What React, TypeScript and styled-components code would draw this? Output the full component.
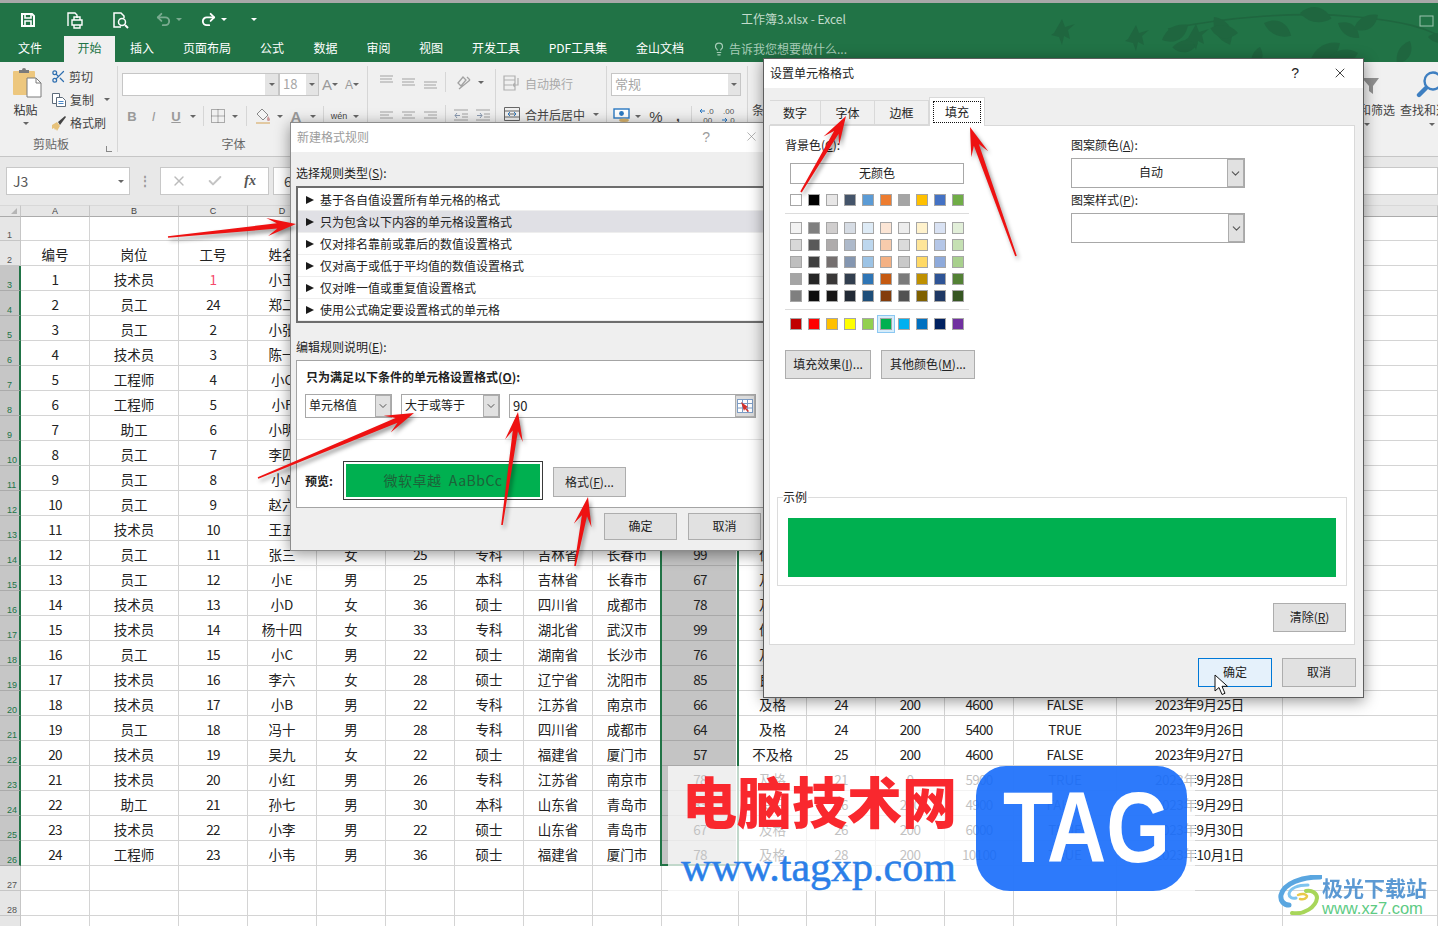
import React from 'react';
import styled, { createGlobalStyle } from 'styled-components';
import { Check, ChevronDown, Lightbulb, Redo2, Scissors, Undo2, X } from 'lucide-react';

const CJK = '"Noto Sans CJK SC", "Noto Sans", sans-serif';

const GlobalStyle = createGlobalStyle`
  html, body { margin: 0; padding: 0; background: #fff; }
  * { box-sizing: border-box; }
`;

const Page = styled.div`
  position: relative;
  width: 1438px;
  height: 926px;
  overflow: hidden;
  font-family: ${CJK};
  font-size: 12px;
  color: #222;
  background: #fff;
`;

/* ---------- title bar + tabs ---------- */

const TopEdge = styled.div`
  height: 3px;
  background: #a8a8a8;
`;

const Header = styled.header`
  position: relative;
  height: 59px;
  background: #217346;
  overflow: hidden;
`;

const Leaves = styled.svg`
  position: absolute;
  left: 1038px;
  top: 0;
  width: 400px;
  height: 59px;
  fill: #1f663f;
`;

const Qat = styled.div`
  position: relative;
  display: flex;
  align-items: center;
  height: 33px;
  padding-left: 20px;
  color: #fff;
`;

const QatSlot = styled.div<{ $w: number; $dim?: boolean }>`
  width: ${(p) => p.$w}px;
  display: flex;
  align-items: center;
  opacity: ${(p) => (p.$dim ? 0.4 : 1)};
`;

const Caret = styled.span<{ $c?: string; $ml?: number }>`
  display: inline-block;
  width: 0;
  height: 0;
  margin-left: ${(p) => p.$ml ?? 4}px;
  border-left: 3px solid transparent;
  border-right: 3px solid transparent;
  border-top: 3px solid ${(p) => p.$c ?? '#666'};
`;

const DocTitle = styled.div`
  position: absolute;
  left: 741px;
  top: 7px;
  color: #c3dccd;
  font-size: 12px;
  line-height: 18px;
`;

const TabRow = styled.nav`
  position: relative;
  display: flex;
  height: 26px;
`;

const Tab = styled.div<{ $w: number; $active?: boolean }>`
  width: ${(p) => p.$w}px;
  text-align: center;
  line-height: 24px;
  color: ${(p) => (p.$active ? '#217346' : '#fff')};
  background: ${(p) => (p.$active ? '#f0f0f0' : 'transparent')};
  &:first-child {
    padding-right: 4px;
  }
`;

const TellMe = styled.div`
  display: flex;
  align-items: center;
  gap: 3px;
  margin-left: 13px;
  padding-bottom: 1px;
  color: #a8cdb8;
`;

/* ---------- ribbon ---------- */

const Ribbon = styled.section`
  display: flex;
  height: 95px;
  padding-top: 4px;
  background: #f0f0f0;
  border-bottom: 1px solid #c6c6c6;
  overflow: hidden;
  color: #444;
`;

const Group = styled.div<{ $w: number }>`
  flex: 0 0 ${(p) => p.$w}px;
  height: 86px;
  display: flex;
  flex-direction: column;
  border-right: 1px solid #d6d6d6;
  position: relative;
`;

const GroupBody = styled.div`
  display: flex;
  height: 70px;
`;

const GroupLabel = styled.div<{ $pr: number }>`
  height: 18px;
  padding-right: ${(p) => p.$pr}px;
  padding-top: 2px;
  line-height: 16px;
  text-align: center;
  color: #666;
`;

const Launcher = styled.span`
  position: absolute;
  right: 5px;
  bottom: 0;
  width: 6px;
  height: 6px;
  border-left: 1px solid #888;
  border-bottom: 1px solid #888;
`;

const PasteBlock = styled.div`
  width: 51px;
  display: flex;
  flex-direction: column;
  align-items: center;
  color: #333;
  line-height: 16px;
  gap: 4px;
  svg {
    margin-left: 3px;
  }
`;

const ClipList = styled.div`
  display: flex;
  flex-direction: column;
  margin-top: -1px;
`;

const ClipItem = styled.div`
  display: flex;
  align-items: center;
  height: 23px;
  gap: 3px;
  color: #444;
`;

const Stack = styled.div<{ $w?: number; $pl?: number }>`
  ${(p) => (p.$w ? `width: ${p.$w}px;` : '')}
  padding-left: ${(p) => p.$pl ?? 0}px;
  display: flex;
  flex-direction: column;
`;

const ToolRow = styled.div<{ $mt?: number; $h?: number }>`
  display: flex;
  align-items: center;
  margin-top: ${(p) => p.$mt ?? 0}px;
  height: ${(p) => p.$h ?? 22}px;
`;

const Slot = styled.div<{ $w: number; $c?: string; $b?: boolean; $i?: boolean; $u?: boolean; $fs?: number }>`
  width: ${(p) => p.$w}px;
  display: flex;
  justify-content: center;
  align-items: center;
  font-family: "Liberation Sans", sans-serif;
  font-size: ${(p) => p.$fs ?? 12}px;
  color: ${(p) => p.$c ?? '#9a9a9a'};
  font-weight: ${(p) => (p.$b ? 700 : 400)};
  font-style: ${(p) => (p.$i ? 'italic' : 'normal')};
  text-decoration: ${(p) => (p.$u ? 'underline' : 'none')};
`;

const ToolSep = styled.span`
  width: 1px;
  height: 20px;
  background: #d6d6d6;
  margin: 0 4px;
`;

const RibbonBox = styled.div<{ $w: number; $seg: number }>`
  position: relative;
  width: ${(p) => p.$w}px;
  height: 23px;
  background: #fff;
  border: 1px solid #c6c6c6;
  color: #a6a6a6;
  line-height: 20px;
  padding-left: 3px;
  font-size: 13px;
  &::after {
    content: '';
    position: absolute;
    top: 0;
    right: 0;
    bottom: 0;
    width: ${(p) => p.$seg}px;
    background: #e4e4e4;
  }
`;

const BoxCaret = styled(Caret)`
  position: absolute;
  right: 3px;
  top: 9px;
  z-index: 1;
`;

const SplitLine = styled.span<{ $ml: number }>`
  width: 1px;
  height: 62px;
  background: #d6d6d6;
  margin-left: ${(p) => p.$ml}px;
  margin-top: 3px;
`;

const WrapText = styled.div<{ $dim?: boolean; $mt?: number }>`
  display: flex;
  align-items: center;
  gap: 4px;
  margin-top: ${(p) => p.$mt ?? 0}px;
  color: ${(p) => (p.$dim ? '#aaa' : '#444')};
  height: 20px;
`;

const StylesCut = styled.div`
  margin: 35px 0 0 4px;
  line-height: 18px;
  white-space: nowrap;
`;

const BigTool = styled.div<{ $mr?: number }>`
  flex: 0 0 60px;
  margin-right: ${(p) => p.$mr ?? 0}px;
  display: flex;
  flex-direction: column;
  align-items: center;
  height: 70px;
`;

const BigIcon = styled.div<{ $pl: number; $mt: number }>`
  height: 30px;
  margin-top: ${(p) => p.$mt}px;
  padding-left: ${(p) => p.$pl}px;
`;

const BigText = styled.div<{ $mt: number }>`
  margin-top: ${(p) => p.$mt}px;
  margin-bottom: 4px;
  white-space: nowrap;
  line-height: 18px;
`;

/* ---------- formula bar ---------- */

const FormulaBar = styled.div`
  display: flex;
  align-items: flex-start;
  height: 48px;
  padding: 10px 0 0 6px;
  background: #e8e8e8;
`;

const NameBox = styled.div`
  position: relative;
  width: 124px;
  height: 28px;
  background: #fff;
  border: 1px solid #c8c8c8;
  padding-left: 6px;
  line-height: 26px;
  font-size: 14px;
  color: #555;
`;

const NameCaret = styled(BoxCaret)`
  right: 5px;
  top: 12px;
`;

const Dots = styled.div`
  width: 30px;
  text-align: center;
  color: #999;
  line-height: 26px;
  font-weight: 700;
`;

const FxBox = styled.div`
  width: 109px;
  height: 28px;
  background: #fff;
  border: 1px solid #c8c8c8;
  display: flex;
  align-items: center;
`;

const FxSlot = styled.div<{ $c: string }>`
  flex: 1;
  display: flex;
  justify-content: center;
  color: ${(p) => p.$c};
  font-family: "Liberation Serif", serif;
  font-style: italic;
  font-weight: 700;
  font-size: 14px;
`;

const FormulaInput = styled.div`
  flex: 1;
  height: 28px;
  margin-left: 4px;
  padding-left: 10px;
  line-height: 26px;
  background: #fff;
  border: 1px solid #c8c8c8;
  font-size: 14px;
  color: #444;
`;

/* ---------- sheet ---------- */

const COL_WIDTHS = [21, 69, 89, 69, 69, 69, 69, 69, 69, 69, 77, 68, 69, 69, 69, 103, 166, 155];
const COL_NAMES = 'ABCDEFGHIJKLMNOPQ'.split('');

const Sheet = styled.main`
  position: relative;
  display: grid;
  grid-template-columns: ${COL_WIDTHS.map((w) => `${w}px`).join(' ')};
  grid-auto-rows: 25px;
  grid-template-rows: 12px 24px;
`;

const Corner = styled.div`
  position: relative;
  background: #e6e6e6;
  border-right: 1px solid #c6c6c6;
  border-bottom: 1px solid #ababab;
  border-top: 1px solid #d8d8d8;
  &::after {
    content: '';
    position: absolute;
    right: 3px;
    bottom: 2px;
    border-left: 6px solid transparent;
    border-bottom: 6px solid #b5b5b5;
  }
`;

const ColHead = styled.div`
  background: #e6e6e6;
  border-right: 1px solid #c6c6c6;
  border-bottom: 1px solid #ababab;
  border-top: 1px solid #d8d8d8;
  font-family: "Liberation Sans", sans-serif;
  font-size: 9px;
  line-height: 11px;
  text-align: center;
  color: #444;
`;

const RowHead = styled.div<{ $sel?: boolean; $first?: boolean }>`
  background: ${(p) => (p.$sel ? '#c6c6c6' : '#e6e6e6')};
  border-right: ${(p) => (p.$sel ? '2px solid #217346' : '1px solid #c6c6c6')};
  border-bottom: 1px solid ${(p) => (p.$sel ? '#ababab' : '#c6c6c6')};
  color: ${(p) => (p.$sel ? '#217346' : '#555')};
  font-family: "Liberation Sans", sans-serif;
  font-size: 9px;
  padding-left: 7px;
  padding-top: ${(p) => (p.$first ? 13 : 14)}px;
  line-height: 10px;
`;

const Cell = styled.div<{ $sel?: boolean; $c?: string; $ls?: number }>`
  border-right: 1px solid ${(p) => (p.$sel ? '#a8a8a8' : '#d4d4d4')};
  border-bottom: 1px solid ${(p) => (p.$sel ? '#a8a8a8' : '#d4d4d4')};
  background: ${(p) => (p.$sel ? '#c4c4c4' : '#fff')};
  color: ${(p) => p.$c ?? '#222'};
  text-align: center;
  white-space: nowrap;
  overflow: hidden;
  font-size: 13.5px;
  line-height: 27px;
  letter-spacing: ${(p) => p.$ls ?? 0}px;
`;

const SelectionFrame = styled.div`
  position: absolute;
  left: 660px;
  top: 61px;
  width: 79px;
  height: 600px;
  border: 2px solid #217346;
  box-shadow: inset -1px 0 0 #fff;
`;

/* ---------- dialogs ---------- */

const Dialog = styled.section<{ $x: number; $y: number; $w: number; $h: number; $dim?: boolean }>`
  position: absolute;
  left: ${(p) => p.$x}px;
  top: ${(p) => p.$y}px;
  width: ${(p) => p.$w}px;
  height: ${(p) => p.$h}px;
  background: #efefef;
  border: 1px solid ${(p) => (p.$dim ? '#8c8c8c' : '#5e5e5e')};
  box-shadow: 0 3px 14px rgba(0, 0, 0, 0.42);
  color: #222;
`;

const DlgTitle = styled.div<{ $dim?: boolean }>`
  display: flex;
  align-items: center;
  height: 29px;
  padding: 0 0 2px 6px;
  background: #fff;
  color: ${(p) => (p.$dim ? '#9c9c9c' : '#222')};
`;

const DlgTitleText = styled.span`
  flex: 1;
`;

const DlgHelp = styled.span<{ $mr: number }>`
  margin-right: ${(p) => p.$mr}px;
  font-size: 14px;
  font-family: "Liberation Sans", sans-serif;
`;

const DlgClose = styled.span<{ $mr: number }>`
  display: flex;
  margin-right: ${(p) => p.$mr}px;
`;

const FormLabel = styled.div<{ $mt: number; $b?: boolean; $ml?: number }>`
  margin-top: ${(p) => p.$mt}px;
  margin-left: ${(p) => p.$ml ?? 0}px;
  height: 16px;
  line-height: 16px;
  font-weight: ${(p) => (p.$b ? 700 : 400)};
  white-space: nowrap;
  color: #222;
  u { text-underline-offset: 1px; }
`;

const DlgBody = styled.div`
  padding-left: 5px;
`;

const RuleList = styled.div`
  margin-top: 5px;
  width: 480px;
  height: 137px;
  padding-top: 1px;
  background: #fff;
  border: 2px solid #6d6d6d;
`;

const RuleRow = styled.div<{ $sel?: boolean }>`
  display: flex;
  align-items: center;
  gap: 6px;
  height: 22px;
  padding-left: 8px;
  background: ${(p) => (p.$sel ? '#e0e0e5' : '#fff')};
  border-bottom: 1px solid #eeeeee;
  white-space: nowrap;
`;

const RuleMark = styled.span`
  width: 0;
  height: 0;
  border-left: 8px solid #1a1a1a;
  border-top: 4px solid transparent;
  border-bottom: 4px solid transparent;
`;

const RulePanel = styled.div`
  margin-top: 5px;
  width: 480px;
  height: 148px;
  background: #fff;
  border: 1px solid #a4a4a4;
  padding: 0 0 0 8px;
`;

const CondRow = styled.div`
  display: flex;
  align-items: center;
  margin-top: 9px;
  height: 24px;
`;

const Combo = styled.div<{ $w: number; $h?: number; $mr?: number; $mt?: number }>`
  display: flex;
  align-items: stretch;
  width: ${(p) => p.$w}px;
  height: ${(p) => p.$h ?? 24}px;
  margin-right: ${(p) => p.$mr ?? 0}px;
  margin-top: ${(p) => p.$mt ?? 0}px;
  background: #fff;
  border: 1px solid #a8a8a8;
`;

const ComboText = styled.span<{ $center?: boolean }>`
  flex: 1;
  padding: 0 0 3px 3px;
  display: flex;
  align-items: center;
  justify-content: ${(p) => (p.$center ? 'center' : 'flex-start')};
  white-space: nowrap;
`;

const ComboBtn = styled.span<{ $w?: number }>`
  width: ${(p) => p.$w ?? 16}px;
  display: flex;
  align-items: center;
  justify-content: center;
  background: #e1e1e1;
  border: 1px solid #adadad;
  color: #555;
`;

const ValueInput = styled.div`
  display: flex;
  width: 247px;
  height: 24px;
  background: #fff;
  border: 1px solid #a8a8a8;
`;

const ValueText = styled.span`
  flex: 1;
  padding-left: 3px;
  line-height: 21px;
  font-size: 13px;
`;

const RangeBtn = styled.span`
  width: 20px;
  display: flex;
  align-items: center;
  justify-content: center;
  background: #dcdcdc;
  border: 1px solid #b0b0b0;
`;

const PanelRule = styled.div`
  margin: 21px 0 0 -8px;
  height: 1px;
  background: #e4e4e4;
`;

const PreviewRow = styled.div`
  display: flex;
  margin-top: 21px;
`;

const PreviewLabel = styled.span`
  width: 38px;
  font-weight: 700;
  line-height: 40px;
`;

const PreviewBox = styled.div`
  width: 200px;
  height: 39px;
  padding: 2px;
  background: #fff;
  border: 1px solid #3a3a3a;
`;

const PreviewFill = styled.div`
  height: 100%;
  background: #00b050;
  color: #1d6239;
  text-align: center;
  font-size: 14px;
  line-height: 33px;
  letter-spacing: 0.5px;
  white-space: pre;
`;

const Btn = styled.div<{ $w: number; $h: number; $ml?: number; $mt?: number; $primary?: boolean }>`
  width: ${(p) => p.$w}px;
  height: ${(p) => p.$h}px;
  margin-left: ${(p) => p.$ml ?? 0}px;
  margin-top: ${(p) => p.$mt ?? 0}px;
  padding-bottom: 2px;
  flex: none;
  display: flex;
  align-items: center;
  justify-content: center;
  background: ${(p) => (p.$primary ? '#e5f1fb' : '#e1e1e1')};
  border: 1px solid ${(p) => (p.$primary ? '#0078d7' : '#adadad')};
  color: #222;
  white-space: nowrap;
`;

const BtnRow = styled.div<{ $ml?: number; $mt?: number }>`
  display: flex;
  margin-left: ${(p) => p.$ml ?? 0}px;
  margin-top: ${(p) => p.$mt ?? 0}px;
`;

const TabStrip = styled.div`
  position: relative;
  display: flex;
  align-items: flex-end;
  height: 37px;
  padding-left: 6px;
`;

const DlgTab = styled.div<{ $w: number; $active?: boolean }>`
  position: relative;
  width: ${(p) => p.$w}px;
  height: ${(p) => (p.$active ? 29 : 25)}px;
  margin-bottom: ${(p) => (p.$active ? -1 : 0)}px;
  z-index: ${(p) => (p.$active ? 1 : 0)};
  background: ${(p) => (p.$active ? '#fff' : '#f0f0f0')};
  border: 1px solid #d9d9d9;
  border-bottom: ${(p) => (p.$active ? '0' : '1px solid #d9d9d9')};
  border-left: ${(p) => (p.$active ? '1px solid #d9d9d9' : '0')};
  text-align: center;
  line-height: ${(p) => (p.$active ? 27 : 23)}px;
`;

const FocusRing = styled.span`
  position: absolute;
  left: 3px;
  right: 3px;
  top: 3px;
  height: 22px;
  border: 1px dotted #111;
`;

const FillPanel = styled.div`
  margin-left: 5px;
  width: 586px;
  height: 520px;
  background: #fff;
  border: 1px solid #d9d9d9;
`;

const FillTop = styled.div`
  display: flex;
  height: 371px;
  padding-left: 15px;
`;

const FillLeft = styled.div`
  width: 286px;
`;

const FillRight = styled.div`
  width: 174px;
`;

const NoColor = styled.div`
  margin: 10px 0 0 5px;
  width: 174px;
  height: 21px;
  border: 1px solid #a8a8a8;
  text-align: center;
  line-height: 18px;
`;

const SwatchGrid = styled.div<{ $mt: number; $rowGap?: number }>`
  display: grid;
  grid-template-columns: repeat(10, 12px);
  column-gap: 6px;
  row-gap: ${(p) => p.$rowGap ?? 5}px;
  margin: ${(p) => p.$mt}px 0 0 5px;
`;

const Swatch = styled.span<{ $on?: boolean }>`
  width: 12px;
  height: 12px;
  border: 1px solid #a6a6a6;
  ${(p) => (p.$on ? 'box-shadow: 0 0 0 2px #d6ecfa, 0 0 0 3px #8cc8f2;' : '')}
`;

const PaletteRule = styled.div`
  margin-top: 7px;
  width: 184px;
  height: 1px;
  background: #dcdcdc;
`;

const Sample = styled.div`
  position: relative;
  margin: 0 0 0 7px;
  width: 570px;
  height: 89px;
  padding: 20px 10px 0;
  border: 1px solid #dcdcdc;
`;

const SampleLegend = styled.span`
  position: absolute;
  left: 5px;
  top: -9px;
  line-height: 16px;
  background: #fff;
  padding-right: 1px;
`;

const SampleFill = styled.div`
  height: 59px;
  background: #00b050;
`;

const ClearRow = styled.div`
  display: flex;
  justify-content: flex-end;
  margin: 17px 8px 0 0;
`;

const DlgFooter = styled.div`
  display: flex;
  justify-content: flex-end;
  gap: 10px;
  margin-top: 13px;
  padding-right: 7px;
`;

/* ---------- overlays ---------- */

const ArrowLayer = styled.svg`
  position: absolute;
  left: 0;
  top: 0;
  width: 1438px;
  height: 926px;
  pointer-events: none;
`;

const ArrowShape = styled.polygon`
  fill: #ee1212;
  filter: drop-shadow(2px 3px 2px rgba(0, 0, 0, 0.42));
`;

const Pointer = styled.svg`
  position: absolute;
  left: 1214px;
  top: 674px;
  width: 14px;
  height: 22px;
`;

const Watermark = styled.div`
  position: absolute;
  left: 668px;
  top: 766px;
  width: 527px;
  height: 125px;
  background: rgba(255, 255, 255, 0.72);
`;

const MarkRed = styled.div`
  position: absolute;
  left: 14px;
  top: -5px;
  font-size: 55px;
  line-height: 76px;
  font-weight: 900;
  color: #f9282e;
  white-space: nowrap;
`;

const MarkUrl = styled.div`
  position: absolute;
  left: 13px;
  top: 78px;
  font-family: "Liberation Serif", serif;
  font-size: 42px;
  line-height: 46px;
  color: #2b7fe8;
  -webkit-text-stroke: 0.5px #2b7fe8;
  white-space: nowrap;
`;

const MarkBadge = styled.div`
  position: absolute;
  left: 308px;
  top: 0;
  width: 211px;
  height: 125px;
  border-radius: 30px 30px 34px 34px;
  background: rgba(10, 100, 250, 0.86);
  overflow: hidden;
`;

const MarkTag = styled.div`
  position: absolute;
  left: -15px;
  right: -25px;
  top: 4px;
  text-align: center;
  font-family: "Liberation Sans", sans-serif;
  font-weight: 700;
  font-size: 100px;
  line-height: 115px;
  color: #fff;
  transform: scaleX(0.82);
`;

const SiteLogo = styled.div`
  position: absolute;
  left: 1278px;
  top: 875px;
  display: flex;
  gap: 0;
`;

const SiteText = styled.div`
  display: flex;
  flex-direction: column;
`;

const SiteName = styled.div`
  font-size: 21px;
  line-height: 25px;
  font-weight: 700;
  color: #4a8fcf;
  white-space: nowrap;
  opacity: 0.9;
`;

const SiteUrl = styled.div`
  font-family: "Liberation Sans", sans-serif;
  font-size: 16.5px;
  line-height: 17px;
  color: #5ecb84;
`;

/* ---------- data ---------- */

const TABS: [string, number][] = [
  ['文件', 64], ['开始', 51], ['插入', 54], ['页面布局', 76], ['公式', 54], ['数据', 53],
  ['审阅', 53], ['视图', 52], ['开发工具', 78], ['PDF工具集', 86], ['金山文档', 78],
];

const HEAD = '编号 岗位 工号 姓名 性别 年龄 学历 省份 城市 成绩 等级 工龄 补贴 工资 达标 日期'.split(' ');

const ROWS = [
  '1 技术员 1 小王 男 25 本科 吉林省 长春市 88 良好 24 200 4600 TRUE 2023年9月8日',
  '2 员工 24 郑二 男 26 本科 山东省 青岛市 90 优秀 24 200 4800 TRUE 2023年9月9日',
  '3 员工 2 小张 女 22 专科 四川省 成都市 72 及格 24 200 4400 FALSE 2023年9月10日',
  '4 技术员 3 陈一 男 28 硕士 湖北省 武汉市 81 良好 25 200 5200 TRUE 2023年9月11日',
  '5 工程师 4 小C 女 30 硕士 湖南省 长沙市 94 优秀 26 200 6200 TRUE 2023年9月12日',
  '6 工程师 5 小F 男 33 本科 辽宁省 沈阳市 69 及格 26 200 6000 FALSE 2023年9月13日',
  '7 助工 6 小明 男 22 专科 江苏省 南京市 75 及格 24 200 4200 TRUE 2023年9月14日',
  '8 员工 7 李四 女 25 本科 福建省 厦门市 83 良好 24 200 4500 TRUE 2023年9月15日',
  '9 员工 8 小A 男 28 专科 吉林省 长春市 58 不及格 25 200 4300 FALSE 2023年9月16日',
  '10 员工 9 赵六 女 26 本科 山东省 青岛市 77 及格 24 200 4600 TRUE 2023年9月17日',
  '11 技术员 10 王五 男 30 硕士 四川省 成都市 91 优秀 26 200 5600 TRUE 2023年9月18日',
  '12 员工 11 张三 女 25 专科 吉林省 长春市 99 优秀 24 200 4700 TRUE 2023年9月19日',
  '13 员工 12 小E 男 25 本科 吉林省 长春市 67 及格 24 200 4500 TRUE 2023年9月20日',
  '14 技术员 13 小D 女 36 硕士 四川省 成都市 78 及格 25 200 5000 TRUE 2023年9月21日',
  '15 技术员 14 杨十四 女 33 专科 湖北省 武汉市 99 优秀 26 200 5300 TRUE 2023年9月22日',
  '16 员工 15 小C 男 22 硕士 湖南省 长沙市 76 及格 24 200 4400 TRUE 2023年9月23日',
  '17 技术员 16 李六 女 28 硕士 辽宁省 沈阳市 85 良好 25 200 5100 TRUE 2023年9月24日',
  '18 技术员 17 小B 男 22 专科 江苏省 南京市 66 及格 24 200 4600 FALSE 2023年9月25日',
  '19 员工 18 冯十 男 28 专科 四川省 成都市 64 及格 24 200 5400 TRUE 2023年9月26日',
  '20 技术员 19 吴九 女 22 硕士 福建省 厦门市 57 不及格 25 200 4600 FALSE 2023年9月27日',
  '21 技术员 20 小红 男 26 专科 江苏省 南京市 78 及格 21 0 5900 TRUE 2023年9月28日',
  '22 助工 21 孙七 男 30 本科 山东省 青岛市 83 良好 26 200 4900 FALSE 2023年9月29日',
  '23 技术员 22 小李 男 22 硕士 山东省 青岛市 67 及格 26 200 6000 TRUE 2023年9月30日',
  '24 工程师 23 小韦 男 36 硕士 福建省 厦门市 78 及格 28 200 10100 TRUE 2023年10月1日',
].map((r) => r.split(' '));

const RULES = [
  '基于各自值设置所有单元格的格式',
  '只为包含以下内容的单元格设置格式',
  '仅对排名靠前或靠后的数值设置格式',
  '仅对高于或低于平均值的数值设置格式',
  '仅对唯一值或重复值设置格式',
  '使用公式确定要设置格式的单元格',
];

const THEME_COLORS = ['#ffffff', '#000000', '#e7e6e6', '#44546a', '#5b9bd5', '#ed7d31', '#a5a5a5', '#ffc000', '#4472c4', '#70ad47'];
const TINTS = [
  '#f2f2f2 #7f7f7f #d0cece #d6dce4 #deebf6 #fbe5d5 #ededed #fff2cc #d9e2f3 #e2efd9',
  '#d8d8d8 #595959 #aeabab #adb9ca #bdd7ee #f7cbac #dbdbdb #fee599 #b4c6e7 #c5e0b3',
  '#bfbfbf #3f3f3f #757070 #8496b0 #9cc3e5 #f4b183 #c9c9c9 #ffd965 #8eaadb #a8d08d',
  '#a5a5a5 #262626 #3a3838 #323f4f #2e75b5 #c55a11 #7b7b7b #bf9000 #2f5496 #538135',
  '#7f7f7f #0c0c0c #171616 #222a35 #1e4e79 #833c0b #525252 #7f6000 #1f3864 #375623',
].join(' ').split(' ');
const STANDARD = ['#c00000', '#ff0000', '#ffc000', '#ffff00', '#92d050', '#00b050', '#00b0f0', '#0070c0', '#002060', '#7030a0'];

const ARROWS = [
  [168, 237, 296, 224],
  [258, 478, 414, 413],
  [502, 525, 518, 412],
  [575, 566, 588, 497],
  [801, 192, 846, 116],
  [1016, 256, 970, 127],
];

const arrowPoints = ([x1, y1, x2, y2]: number[]) => {
  const len = Math.hypot(x2 - x1, y2 - y1);
  const ux = (x2 - x1) / len;
  const uy = (y2 - y1) / len;
  const at = (d: number, s: number) => `${(x1 + ux * d - uy * s).toFixed(1)},${(y1 + uy * d + ux * s).toFixed(1)}`;
  return [
    at(0, 0.8), at(len - 19, 2.6), at(len - 29, 9), at(len, 0),
    at(len - 29, -9), at(len - 19, -2.6), at(0, -0.8),
  ].join(' ');
};

const cellSpacing = (text: string | undefined, col: number) => {
  if (text === undefined) return 0;
  if (col === 15) return -0.4;
  if (/^\d+$/.test(text)) return -0.7;
  if (/^[A-Z]+$/.test(text)) return -0.2;
  return 0;
};

/* ---------- drawings ---------- */

const SaveIcon = () => (
  <svg width="16" height="16" viewBox="0 0 16 16" fill="none" stroke="#fff" strokeWidth="2">
    <path d="M2 2h10l2 2v10H2z" />
    <path d="M5 2v4h6V2M5 14v-5h6v5" strokeWidth="1.6" />
  </svg>
);

const PrintIcon = () => (
  <svg width="18" height="18" viewBox="0 0 18 18" fill="none" stroke="#fff" strokeWidth="1.4">
    <path d="M2 15V2h7l2 2v3" />
    <path d="M6 9h10v5H6zM8 9V6h6v3M8 14v3h6v-3" />
  </svg>
);

const PreviewIcon = () => (
  <svg width="18" height="18" viewBox="0 0 18 18" fill="none" stroke="#fff" strokeWidth="1.5">
    <path d="M9 16H2V2h7l3 3v2" />
    <circle cx="10" cy="11" r="3.5" />
    <path d="M13 14l3 3" strokeWidth="2" />
  </svg>
);

const PasteIcon = () => (
  <svg width="30" height="32" viewBox="0 0 30 32">
    <rect x="1" y="5" width="22" height="24" rx="1" fill="#edc77e" />
    <path d="M7 7V4h3a2 2 0 0 1 4 0h3v3z" fill="#7a7a7a" />
    <path d="M15 12h9l5 5v14H15z" fill="#fff" stroke="#7a7a7a" />
    <path d="M24 12v5h5" fill="none" stroke="#7a7a7a" />
  </svg>
);

const CopyIcon = () => (
  <svg width="16" height="16" viewBox="0 0 16 16" fill="#fff" stroke="#5d6b7a">
    <path d="M1.500 1.500h7v10h-7z" />
    <path d="M5.500 5.500h6l3 3v6h-9z" />
    <path d="M7.500 9.500h5M7.500 11.500h5" stroke="#4a86c5" />
  </svg>
);

const BrushIcon = () => (
  <svg width="16" height="16" viewBox="0 0 16 16">
    <path d="M1 10l5-3 3 4-3 5-1-2-1 1-1-2-2 1z" fill="#e7c27a" />
    <path d="M7 7l7-6 1 1-6 8z" fill="#444" />
  </svg>
);

const BorderIcon = () => (
  <svg width="14" height="14" viewBox="0 0 14 14" fill="none" stroke="#666" strokeDasharray="1 1">
    <path d="M.5.500h13v13H.5zM7 .500v13M.5 7h13" />
  </svg>
);

const FillIcon = () => (
  <svg width="18" height="18" viewBox="0 0 18 18">
    <path d="M8 2l6 6-5 5-6-6z" fill="#f4f4f4" stroke="#888" />
    <path d="M2 15h14v2H2z" fill="#e2c9a2" />
    <path d="M14 9c1 1.500 2 2.500 2 3.500a1 1 0 0 1-3 0c0-1 .5-2 1-3.500z" fill="#c99" />
  </svg>
);

const LinesIcon = ({ align }: { align: 'left' | 'center' | 'right' | 'top' | 'mid' | 'low' }) => {
  const offset = { top: -3, mid: 0, low: 3 } as Record<string, number>;
  const dy = offset[align] ?? 0;
  const short = align === 'left' ? 'M1 7h9' : align === 'right' ? 'M5 7h9' : align === 'center' ? 'M3 7h8' : 'M1 7h12';
  return (
    <svg width="15" height="14" viewBox="0 0 15 14" fill="none" stroke="#a2a2a2">
      <path d={`M1 ${4 + dy}h13M1 ${10 + dy}h13`} />
      <path d={short} transform={`translate(0 ${dy})`} />
    </svg>
  );
};

const RotateIcon = () => (
  <svg width="16" height="16" viewBox="0 0 16 16" fill="none" stroke="#a2a2a2" strokeWidth="1.3">
    <path d="M2 9l5-6 3 3-5 6zM3 15l11-9M11 3l3 3" />
  </svg>
);

const IndentIcon = ({ right }: { right?: boolean }) => (
  <svg width="16" height="14" viewBox="0 0 16 14" fill="none" stroke="#a2a2a2">
    <path d="M1 2h14M9 6h6M9 9h6M1 12h14" />
    <path d={right ? 'M2 7.500h5M5 5l2 2.500L5 10' : 'M2 7.500h5M4 5L2 7.500 4 10'} stroke="#8a9ab0" />
  </svg>
);

const WrapIcon = ({ dim }: { dim?: boolean }) => (
  <svg width="18" height="16" viewBox="0 0 18 16" fill="none" stroke={dim ? '#b0b0b0' : '#666'} strokeWidth="1.2">
    <path d="M1 1h11v14H1zM1 5h11M1 10h8M15 3v7h-5M12 8l-2 2 2 2" />
  </svg>
);

const MergeIcon = () => (
  <svg width="18" height="16" viewBox="0 0 18 16" fill="none" stroke="#666">
    <path d="M1.500 1.500h15v13h-15zM1.500 5h15M1.500 11h15M5 8h8" />
    <path d="M5 8l2-2M5 8l2 2M13 8l-2-2M13 8l-2 2" stroke="#2b79c2" />
  </svg>
);

const MoneyIcon = () => (
  <svg width="18" height="16" viewBox="0 0 18 16">
    <rect x="1" y="1" width="15" height="9" fill="#fff" stroke="#2b79c2" strokeWidth="1.4" />
    <circle cx="8.500" cy="5.500" r="2.400" fill="#2b79c2" />
    <ellipse cx="11" cy="12" rx="5" ry="1.600" fill="#d9b36c" />
    <ellipse cx="11" cy="14.500" rx="5" ry="1.600" fill="#d9b36c" />
  </svg>
);

const DecimalIcon = ({ flip }: { flip?: boolean }) => (
  <svg width="17" height="18" viewBox="0 0 17 18" fontFamily="Liberation Sans" fontSize="8" fill="#555">
    <text x={flip ? 2 : 8} y="7">{flip ? '.00' : '.0'}</text>
    <text x={flip ? 7 : 2} y="16">{flip ? '.0' : '.00'}</text>
    <path d={flip ? 'M1 13h5M4 11l2 2-2 2' : 'M1 4h5M3 2L1 4l2 2'} fill="none" stroke="#2b79c2" />
  </svg>
);

const FunnelIcon = () => (
  <svg width="18" height="20" viewBox="0 0 18 20">
    <path d="M0 1h17l-6 8v8l-4-3V9z" fill="#8f8f8f" />
  </svg>
);

const GlassIcon = () => (
  <svg width="28" height="28" viewBox="0 0 28 28" fill="none" stroke="#3e7fc1">
    <circle cx="17" cy="11" r="8.500" strokeWidth="2.400" />
    <path d="M10 18l-7 7" strokeWidth="4.400" strokeLinecap="round" />
  </svg>
);

const RangeIcon = () => (
  <svg width="16" height="14" viewBox="0 0 16 14">
    <rect x=".5" y=".5" width="15" height="13" fill="#fff" stroke="#7d9cc4" />
    <path d="M.5 4.500h15M.5 9h15M5.500 .5v13M10.500 .5v13" stroke="#7d9cc4" fill="none" />
    <path d="M4 3l7 5-2 1 3 3-1 1-3-3-1 2z" fill="#d3312b" />
  </svg>
);

const SwirlLogo = () => (
  <svg width="44" height="40" viewBox="0 0 44 40" fill="none" strokeLinecap="round">
    <path d="M42 2C24 2 6 8 3 20c-1 6 3 10 8 10" stroke="#5aa6e0" strokeWidth="5" />
    <path d="M30 10c-10 0-18 3-19 9 0 3 3 5 7 4" stroke="#7fc4ef" strokeWidth="3" />
    <path d="M14 38c12 2 24-6 25-15 0-5-5-8-11-7" stroke="#a8d65a" strokeWidth="4" />
    <path d="M20 20c4-2 8-1 9 1 0 2-3 4-7 3" stroke="#e9c94a" strokeWidth="2.500" />
  </svg>
);

const leaves: [number, number, number, number][] = [
  [150, 22, 150, 30], [176, 14, 60, 32], [200, 30, 190, 28], [226, 20, 25, 30], [262, 10, 10, 32],
  [300, 20, 35, 26], [340, 12, 150, 28], [372, 38, 120, 26], [302, 40, 150, 34], [222, 44, 110, 22],
  [160, 40, 170, 26], [390, 34, 10, 20], [320, 50, 170, 30],
];

const birds = [[16, 30], [150, 35], [90, 36]];

const LeafArt = () => (
  <Leaves viewBox="0 0 400 59">
    <path d="M130 26C190 14 260 8 320 14s70 14 80 18" fill="none" stroke="#1f663f" strokeWidth="1.600" />
    {leaves.map(([x, y, r, s], i) => (
      <path
        key={i}
        d="M0 0C.3-.36.7-.36 1 0C.7.26.3.26 0 0Z"
        transform={`translate(${x} ${y}) rotate(${r}) scale(${s})`}
      />
    ))}
    {birds.map(([x, y], i) => (
      <path
        key={i}
        transform={`translate(${x} ${y})`}
        d="M0 0l8-14 3 8 10-3-7 6 2 9-6-3-2 9-3-8-8-2z"
      />
    ))}
    <rect x="382" y="13" width="13" height="10" fill="none" stroke="#9cc4ad" />
  </Leaves>
);

/* ---------- sections ---------- */

const TitleBar = () => (
  <Header>
    <LeafArt />
    <Qat>
      <QatSlot $w={46}><SaveIcon /></QatSlot>
      <QatSlot $w={46}><PrintIcon /></QatSlot>
      <QatSlot $w={43}><PreviewIcon /></QatSlot>
      <QatSlot $w={45} $dim>
        <Undo2 size={17} strokeWidth={2.6} />
        <Caret $c="#fff" />
      </QatSlot>
      <QatSlot $w={51}>
        <Redo2 size={17} strokeWidth={2.6} />
        <Caret $c="#fff" />
      </QatSlot>
      <QatSlot $w={16}><Caret $c="#fff" $ml={0} /></QatSlot>
    </Qat>
    <DocTitle>工作簿3.xlsx - Excel</DocTitle>
    <TabRow>
      {TABS.map(([name, w], i) => (
        <Tab key={name} $w={w} $active={i === 1}>{name}</Tab>
      ))}
      <TellMe>
        <Lightbulb size={14} />
        告诉我您想要做什么...
      </TellMe>
    </TabRow>
  </Header>
);

const RibbonBar = () => (
  <Ribbon>
    <Group $w={118}>
      <GroupBody>
        <PasteBlock>
          <PasteIcon />
          <span>粘贴</span>
          <Caret $ml={0} />
        </PasteBlock>
        <ClipList>
          <ClipItem>
            <Scissors size={15} color="#2f6fb0" />
            剪切
          </ClipItem>
          <ClipItem>
            <CopyIcon />
            复制
            <Caret $ml={7} />
          </ClipItem>
          <ClipItem>
            <BrushIcon />
            格式刷
          </ClipItem>
        </ClipList>
      </GroupBody>
      <GroupLabel $pr={15}>剪贴板</GroupLabel>
      <Launcher />
    </Group>

    <Group $w={250}>
      <GroupBody>
        <Stack $pl={4}>
          <ToolRow $mt={7} $h={23}>
            <RibbonBox $w={157} $seg={13}><BoxCaret $ml={0} /></RibbonBox>
            <RibbonBox $w={40} $seg={12}>18<BoxCaret $ml={0} /></RibbonBox>
            <Slot $w={22} $fs={15}>A<Caret $ml={0} /></Slot>
            <Slot $w={22} $fs={12}>A<Caret $ml={0} /></Slot>
          </ToolRow>
          <ToolRow $mt={9}>
            <Slot $w={20} $b $fs={13}>B</Slot>
            <Slot $w={23} $i $fs={13}>I</Slot>
            <Slot $w={22} $u $b $fs={13}>U</Slot>
            <Slot $w={12}><Caret $ml={0} /></Slot>
            <ToolSep />
            <Slot $w={20}><BorderIcon /></Slot>
            <Slot $w={14}><Caret $ml={0} /></Slot>
            <ToolSep />
            <Slot $w={24}><FillIcon /></Slot>
            <Slot $w={10}><Caret $ml={0} /></Slot>
            <Slot $w={22} $b $fs={15}>A</Slot>
            <Slot $w={12}><Caret $ml={0} /></Slot>
            <ToolSep />
            <Slot $w={22} $fs={9} $c="#444">wén</Slot>
            <Slot $w={12}><Caret $ml={0} /></Slot>
          </ToolRow>
        </Stack>
      </GroupBody>
      <GroupLabel $pr={18}>字体</GroupLabel>
    </Group>

    <Group $w={239}>
      <GroupBody>
        <Stack $w={127} $pl={7}>
          <ToolRow $mt={5}>
            <Slot $w={22}><LinesIcon align="top" /></Slot>
            <Slot $w={22}><LinesIcon align="mid" /></Slot>
            <Slot $w={22}><LinesIcon align="low" /></Slot>
            <ToolSep />
            <Slot $w={28}><RotateIcon /></Slot>
            <Caret $ml={0} />
          </ToolRow>
          <ToolRow $mt={11}>
            <Slot $w={22}><LinesIcon align="left" /></Slot>
            <Slot $w={22}><LinesIcon align="center" /></Slot>
            <Slot $w={22}><LinesIcon align="right" /></Slot>
            <ToolSep />
            <Slot $w={22}><IndentIcon /></Slot>
            <Slot $w={22}><IndentIcon right /></Slot>
          </ToolRow>
        </Stack>
        <SplitLine $ml={0} />
        <Stack $pl={7}>
          <WrapText $dim $mt={7}>
            <WrapIcon dim />
            自动换行
          </WrapText>
          <WrapText $mt={11}>
            <MergeIcon />
            合并后居中
            <Caret $ml={4} />
          </WrapText>
        </Stack>
      </GroupBody>
    </Group>

    <Group $w={141}>
      <GroupBody>
        <Stack $pl={4}>
          <ToolRow $mt={7} $h={23}>
            <RibbonBox $w={130} $seg={12}>常规<BoxCaret $ml={0} /></RibbonBox>
          </ToolRow>
          <ToolRow $mt={9}>
            <Slot $w={22}><MoneyIcon /></Slot>
            <Slot $w={10}><Caret $ml={0} /></Slot>
            <Slot $w={26} $c="#444" $fs={15}>%</Slot>
            <Slot $w={18} $c="#444" $b $fs={14}>,</Slot>
            <ToolSep />
            <Slot $w={22}><DecimalIcon /></Slot>
            <Slot $w={22}><DecimalIcon flip /></Slot>
          </ToolRow>
        </Stack>
      </GroupBody>
    </Group>

    <Group $w={587}>
      <GroupBody>
        <StylesCut>条件格式</StylesCut>
      </GroupBody>
    </Group>

    <BigTool $mr={5}>
      <BigIcon $pl={12} $mt={11}><FunnelIcon /></BigIcon>
      <BigText $mt={-6}>排序和筛选</BigText>
      <Caret $ml={4} />
    </BigTool>
    <BigTool>
      <BigIcon $pl={0} $mt={4}><GlassIcon /></BigIcon>
      <BigText $mt={1}>查找和选择</BigText>
      <Caret $ml={4} />
    </BigTool>
  </Ribbon>
);

const Formula = () => (
  <FormulaBar>
    <NameBox>
      J3
      <NameCaret $ml={0} />
    </NameBox>
    <Dots>⋮</Dots>
    <FxBox>
      <FxSlot $c="#bbb"><X size={16} /></FxSlot>
      <FxSlot $c="#c4c4c4"><Check size={16} strokeWidth={3} /></FxSlot>
      <FxSlot $c="#555">fx</FxSlot>
    </FxBox>
    <FormulaInput>6</FormulaInput>
  </FormulaBar>
);

const Grid = () => (
  <Sheet>
    <Corner />
    {COL_NAMES.map((c) => <ColHead key={c}>{c}</ColHead>)}

    <RowHead $first>1</RowHead>
    {COL_NAMES.map((c) => <Cell key={c} />)}

    <RowHead>2</RowHead>
    {COL_NAMES.map((c, i) => <Cell key={c}>{HEAD[i]}</Cell>)}

    {ROWS.map((row, r) => (
      <React.Fragment key={r}>
        <RowHead $sel>{r + 3}</RowHead>
        {COL_NAMES.map((c, i) => {
          const text = row[i];
          const isRed = r === 0 && i === 2;
          return (
            <Cell key={c} $sel={i === 9} $ls={cellSpacing(text, i)} $c={isRed ? '#f5486a' : undefined}>
              {text}
            </Cell>
          );
        })}
      </React.Fragment>
    ))}

    {['27', '28', ''].map((n) => (
      <React.Fragment key={n}>
        <RowHead>{n}</RowHead>
        {COL_NAMES.map((c) => <Cell key={c} />)}
      </React.Fragment>
    ))}
    <SelectionFrame />
  </Sheet>
);

const RuleDialog = () => (
  <Dialog $x={290} $y={122} $w={474} $h={429} $dim>
    <DlgTitle $dim>
      <DlgTitleText>新建格式规则</DlgTitleText>
      <DlgHelp $mr={34}>?</DlgHelp>
      <DlgClose $mr={4}><X size={15} strokeWidth={1} color="#888" /></DlgClose>
    </DlgTitle>
    <DlgBody>
      <FormLabel $mt={13}>选择规则类型(<u>S</u>):</FormLabel>
      <RuleList>
        {RULES.map((rule, i) => (
          <RuleRow key={rule} $sel={i === 1}>
            <RuleMark />
            {rule}
          </RuleRow>
        ))}
      </RuleList>
      <FormLabel $mt={16}>编辑规则说明(<u>E</u>):</FormLabel>
      <RulePanel>
        <FormLabel $mt={8} $b $ml={1}>只为满足以下条件的单元格设置格式(<u>O</u>):</FormLabel>
        <CondRow>
          <Combo $w={87} $mr={9}>
            <ComboText>单元格值</ComboText>
            <ComboBtn><ChevronDown size={12} /></ComboBtn>
          </Combo>
          <Combo $w={99} $mr={9}>
            <ComboText>大于或等于</ComboText>
            <ComboBtn><ChevronDown size={12} /></ComboBtn>
          </Combo>
          <ValueInput>
            <ValueText>90</ValueText>
            <RangeBtn><RangeIcon /></RangeBtn>
          </ValueInput>
        </CondRow>
        <PanelRule />
        <PreviewRow>
          <PreviewLabel>预览:</PreviewLabel>
          <PreviewBox>
            <PreviewFill>微软卓越  AaBbCc</PreviewFill>
          </PreviewBox>
          <Btn $w={73} $h={30} $ml={10} $mt={6}>格式(<u>F</u>)...</Btn>
        </PreviewRow>
      </RulePanel>
      <BtnRow $ml={308} $mt={5}>
        <Btn $w={73} $h={27}>确定</Btn>
        <Btn $w={73} $h={27} $ml={11}>取消</Btn>
      </BtnRow>
    </DlgBody>
  </Dialog>
);

const CellFormatDialog = () => (
  <Dialog $x={763} $y={58} $w={601} $h={640}>
    <DlgTitle>
      <DlgTitleText>设置单元格格式</DlgTitleText>
      <DlgHelp $mr={33}>?</DlgHelp>
      <DlgClose $mr={15}><X size={16} strokeWidth={1.2} color="#111" /></DlgClose>
    </DlgTitle>
    <TabStrip>
      <DlgTab $w={51}>数字</DlgTab>
      <DlgTab $w={54}>字体</DlgTab>
      <DlgTab $w={54}>边框</DlgTab>
      <DlgTab $w={56} $active>
        填充
        <FocusRing />
      </DlgTab>
    </TabStrip>
    <FillPanel>
      <FillTop>
        <FillLeft>
          <FormLabel $mt={11}>背景色(<u>C</u>):</FormLabel>
          <NoColor>无颜色</NoColor>
          <SwatchGrid $mt={10}>
            {THEME_COLORS.map((c, i) => <Swatch key={i} style={{ background: c }} />)}
          </SwatchGrid>
          <PaletteRule />
          <SwatchGrid $mt={8}>
            {TINTS.map((c, i) => <Swatch key={i} style={{ background: c }} />)}
          </SwatchGrid>
          <PaletteRule />
          <SwatchGrid $mt={8}>
            {STANDARD.map((c, i) => <Swatch key={i} $on={i === 5} style={{ background: c }} />)}
          </SwatchGrid>
          <BtnRow $mt={20}>
            <Btn $w={86} $h={29}>填充效果(<u>I</u>)...</Btn>
            <Btn $w={94} $h={29} $ml={10}>其他颜色(<u>M</u>)...</Btn>
          </BtnRow>
        </FillLeft>
        <FillRight>
          <FormLabel $mt={11}>图案颜色(<u>A</u>):</FormLabel>
          <Combo $w={174} $h={30} $mt={5}>
            <ComboText $center>自动</ComboText>
            <ComboBtn $w={17}><ChevronDown size={13} /></ComboBtn>
          </Combo>
          <FormLabel $mt={4}>图案样式(<u>P</u>):</FormLabel>
          <Combo $w={174} $h={30} $mt={5}>
            <ComboText />
            <ComboBtn $w={16}><ChevronDown size={13} /></ComboBtn>
          </Combo>
        </FillRight>
      </FillTop>
      <Sample>
        <SampleLegend>示例</SampleLegend>
        <SampleFill />
      </Sample>
      <ClearRow>
        <Btn $w={73} $h={29}>清除(<u>R</u>)</Btn>
      </ClearRow>
    </FillPanel>
    <DlgFooter>
      <Btn $w={74} $h={29} $primary>确定</Btn>
      <Btn $w={74} $h={29}>取消</Btn>
    </DlgFooter>
  </Dialog>
);

const Overlays = () => (
  <>
    <ArrowLayer viewBox="0 0 1438 926">
      {ARROWS.map((a, i) => <ArrowShape key={i} points={arrowPoints(a)} />)}
    </ArrowLayer>
    <Pointer viewBox="0 0 14 22">
      <path d="M1 1v16l4-3.500 3 7 3-1.200-3-7h5.500z" fill="#fff" stroke="#111" strokeWidth="1" />
    </Pointer>
    <Watermark>
      <MarkRed>电脑技术网</MarkRed>
      <MarkUrl>www.tagxp.com</MarkUrl>
      <MarkBadge>
        <MarkTag>TAG</MarkTag>
      </MarkBadge>
    </Watermark>
    <SiteLogo>
      <SwirlLogo />
      <SiteText>
        <SiteName>极光下载站</SiteName>
        <SiteUrl>www.xz7.com</SiteUrl>
      </SiteText>
    </SiteLogo>
  </>
);

export default function App() {
  return (
    <Page>
      <GlobalStyle />
      <TopEdge />
      <TitleBar />
      <RibbonBar />
      <Formula />
      <Grid />
      <RuleDialog />
      <CellFormatDialog />
      <Overlays />
    </Page>
  );
}
